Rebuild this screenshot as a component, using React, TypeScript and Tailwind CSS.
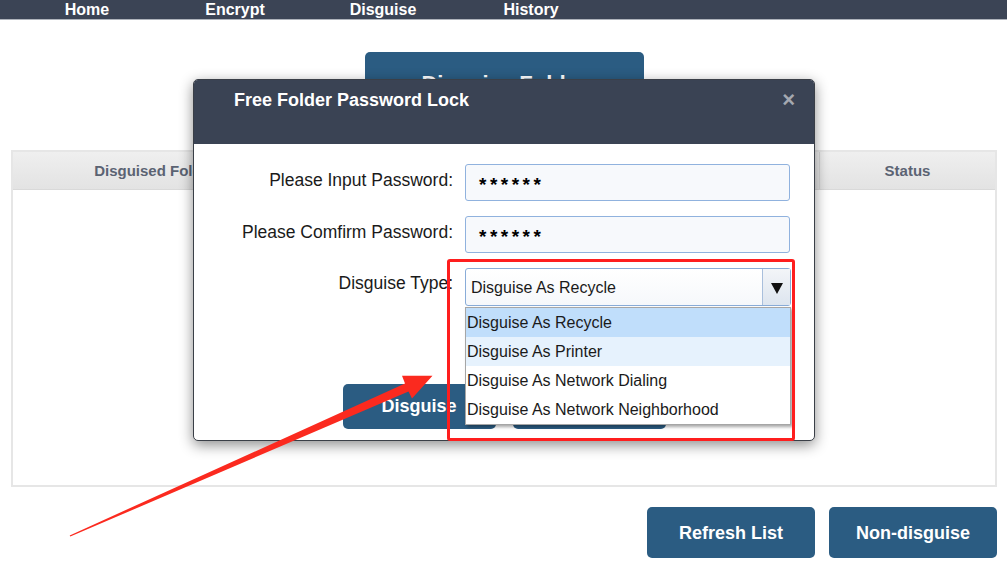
import React from "react";

const font = "font-['Liberation_Sans',Arial,sans-serif]";

export default function App() {
  const navItems = ["Home", "Encrypt", "Disguise", "History"];
  const options = [
    { label: "Disguise As Recycle", cls: "bg-[#c0defb]" },
    { label: "Disguise As Printer", cls: "bg-[#e6f2fd]" },
    { label: "Disguise As Network Dialing", cls: "bg-white" },
    { label: "Disguise As Network Neighborhood", cls: "bg-white" },
  ];
  return (
    <div className={`relative w-[1007px] h-[573px] overflow-hidden bg-white ${font}`}>
      {/* Nav */}
      <div className="h-[20px] bg-[#3b4455] border-b border-[#aeb3bb] flex pl-[13px]">
        {navItems.map((n) => (
          <div key={n} className="w-[148px] text-center text-white font-bold text-[16px] leading-[19px]">
            {n}
          </div>
        ))}
      </div>

      {/* Main */}
      <div className="flex flex-col">
        <div className="flex justify-center pt-[32px] pl-[1px]">
          <div className="w-[279px] h-[58px] rounded-[5px] bg-[#2b5c82] flex items-center justify-center text-white font-bold text-[22px] pt-[4px]">
            Disguise Folder
          </div>
        </div>

        <div className="mt-[40px] ml-[11px] w-[986px] h-[337px] border-2 border-[#e6e6e6] flex flex-col">
          <div className="h-[38px] flex bg-gradient-to-b from-[#efefef] to-[#e3e3e3] border-b border-[#d9d9d9] text-[15px] font-bold text-[#5b6373]">
            <div className="w-[285px] flex items-center justify-center border-r border-[#d6d6d6] pt-[1px]">
              Disguised Folder
            </div>
            <div className="flex-1 border-r border-[#d6d6d6]"></div>
            <div className="w-[175px] flex items-center justify-center pt-[1px]">Status</div>
          </div>
          <div className="flex-1 bg-white"></div>
        </div>

        <div className="flex justify-end gap-[14px] pr-[10px] mt-[20px]">
          <div className="w-[168px] h-[51px] rounded-[5px] bg-[#2b5c82] flex items-center justify-center text-white font-bold text-[18px] pt-[1px]">
            Refresh List
          </div>
          <div className="w-[168px] h-[51px] rounded-[5px] bg-[#2b5c82] flex items-center justify-center text-white font-bold text-[18px] pt-[1px]">
            Non-disguise
          </div>
        </div>
      </div>

      {/* Modal */}
      <div className="absolute left-[193px] top-[79px] w-[622px] h-[362px] rounded-[5px] border border-[#3a3f47] bg-white shadow-[0_4px_14px_rgba(0,0,0,0.45)] flex flex-col overflow-visible">
        <div className="h-[64px] bg-[#3a4354] rounded-t-[4px] flex items-start justify-between pl-[40px] pr-[19px] pt-[9px]">
          <div className="text-white font-bold text-[18px] leading-[22px]">Free Folder Password Lock</div>
          <div className="text-[#a4a8b0] font-bold text-[22px] leading-[18px] pt-[2px]">×</div>
        </div>
        <div className="flex-1 flex flex-col pt-[20px] gap-[15px]">
          <div className="flex items-center">
            <div className="w-[259px] text-right text-[17.5px] text-[#1a1a1a] pb-[5px]">Please Input Password:</div>
            <div className="ml-[12px] w-[325px] h-[37px] rounded-[3px] border border-[#90b2de] bg-[#f7f9fc] flex items-center pl-[13px]">
              <span className="inline-block translate-y-[3px] font-bold text-[19px] tracking-[3.5px] text-black">******</span>
            </div>
          </div>
          <div className="flex items-center">
            <div className="w-[259px] text-right text-[17.5px] text-[#1a1a1a] pb-[5px]">Please Comfirm Password:</div>
            <div className="ml-[12px] w-[325px] h-[37px] rounded-[3px] border border-[#90b2de] bg-[#f7f9fc] flex items-center pl-[13px]">
              <span className="inline-block translate-y-[3px] font-bold text-[19px] tracking-[3.5px] text-black">******</span>
            </div>
          </div>
          <div className="flex items-start">
            <div className="w-[259px] text-right text-[17.5px] text-[#1a1a1a] pt-[2px]">Disguise Type:</div>
            <div className="ml-[12px] w-[326px] relative">
              <div className="h-[38px] rounded-[3px] border border-[#89acd8] bg-gradient-to-b from-white to-[#f6f8fb] flex">
                <div className="flex-1 flex items-center pl-[5px] pt-[2px] text-[16px] text-[#1a1a1a]">Disguise As Recycle</div>
                <div className="w-[28px] border-l border-[#a9bfdc] bg-gradient-to-b from-[#f3f5f8] to-[#dde5ef] flex items-center justify-center pt-[3px]">
                  <svg width="12" height="11" viewBox="0 0 12 11">
                    <polygon points="0,0 12,0 6,11" fill="#111" />
                  </svg>
                </div>
              </div>
              {/* dropdown list */}
              <div className="absolute left-0 top-[39px] w-[326px] z-10 border border-[#a6a6a6] bg-white shadow-[2px_2px_3px_rgba(0,0,0,0.35)]">
                {options.map((o) => (
                  <div key={o.label} className={`h-[29px] flex items-center pl-[1px] text-[16px] text-[#1a1a1a] ${o.cls}`}>
                    {o.label}
                  </div>
                ))}
              </div>
            </div>
          </div>
          <div className="flex justify-center gap-[17px] mt-[63px]">
            <div className="w-[153px] h-[45px] rounded-[5px] bg-[#2b5c82] flex items-center justify-center text-white font-bold text-[18px]">
              Disguise
            </div>
            <div className="w-[153px] h-[45px] rounded-[5px] bg-[#2b5c82] flex items-center justify-center text-white font-bold text-[18px]">
              Cancel
            </div>
          </div>
        </div>
      </div>

      {/* Red highlight box */}
      <div className="absolute left-[447px] top-[259px] w-[348px] h-[182px] border-[3px] border-[#fe1e1e] rounded-[3px] z-20 pointer-events-none"></div>

      {/* Red arrow */}
      <svg className="absolute inset-0 z-30 pointer-events-none" width="1007" height="573" viewBox="0 0 1007 573">
        <polygon
          fill="#fb2a1f"
          points="70.3,536.6 408.5,391.5 412,398.5 432.5,375.8 402,375.8 405,383.5 69.7,535.4"
        />
      </svg>
    </div>
  );
}
